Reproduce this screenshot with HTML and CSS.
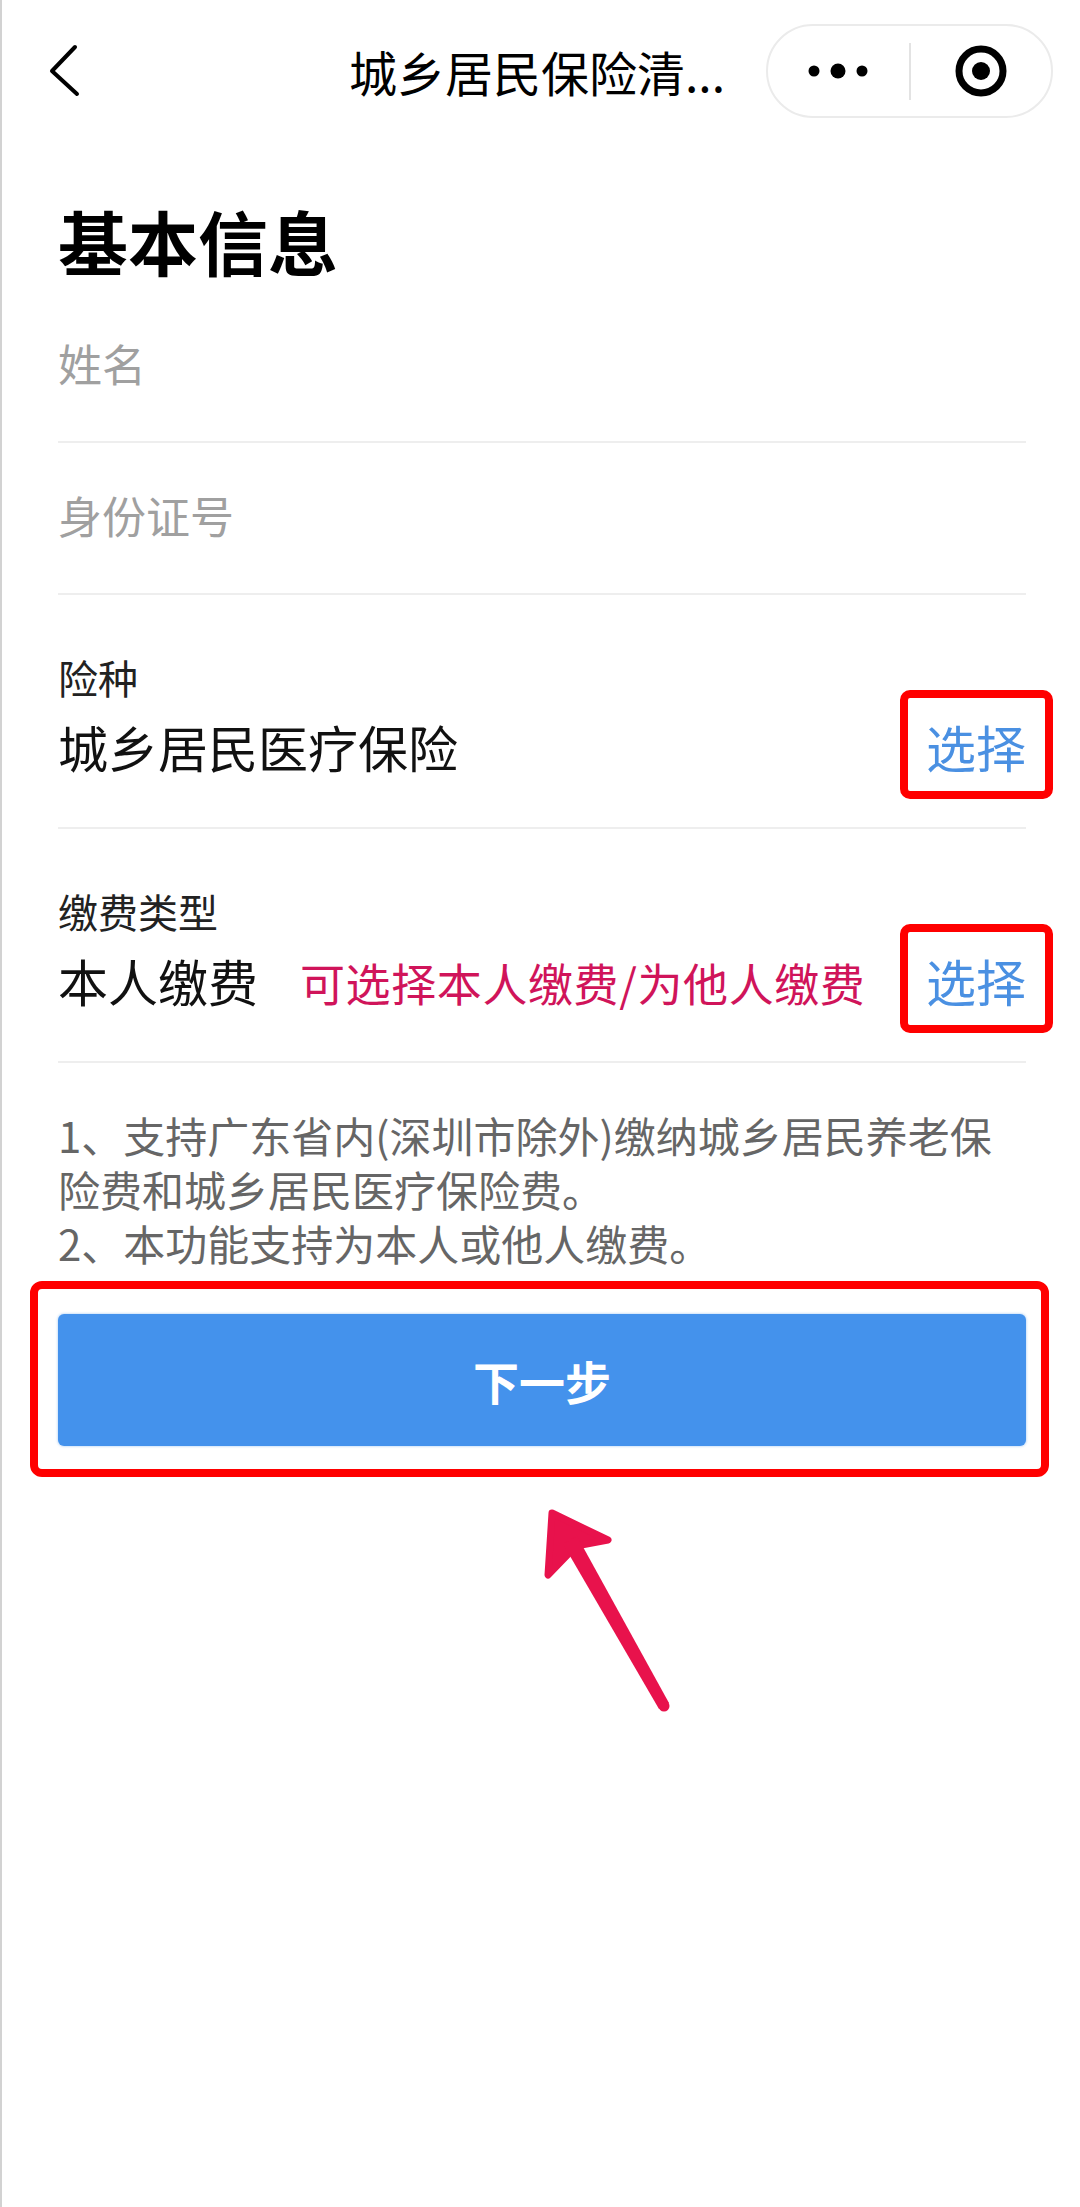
FILE: index.html
```html
<!DOCTYPE html>
<html lang="zh-CN">
<head>
  <meta charset="UTF-8" />
  <meta name="viewport" content="width=device-width, initial-scale=1.0" />
  <title>城乡居民保险清缴</title>
  <link rel="stylesheet" href="styles.css">
</head>
<body>
  <div class="page">
    <!-- top bar -->
    <div class="navbar">
      <div class="nav-back">
        <svg width="36" height="56" viewBox="0 0 36 56">
          <path d="M29 4 L6 28 L31 51" fill="none" stroke="#000" stroke-width="4" stroke-linecap="round" stroke-linejoin="round"/>
        </svg>
      </div>
      <div class="nav-title">城乡居民保险清...</div>
      <div class="capsule">
        <div class="capsule-half">
          <svg width="64" height="20" viewBox="0 0 64 20">
            <circle cx="8" cy="10" r="5.5" fill="#000"/>
            <circle cx="32" cy="10" r="7.5" fill="#000"/>
            <circle cx="56" cy="10" r="5.5" fill="#000"/>
          </svg>
        </div>
        <div class="capsule-divider"></div>
        <div class="capsule-half">
          <svg width="54" height="54" viewBox="0 0 54 54">
            <circle cx="27" cy="27" r="22" fill="none" stroke="#000" stroke-width="7"/>
            <circle cx="27" cy="27" r="9" fill="#000"/>
          </svg>
        </div>
      </div>
    </div>

    <div class="content">
      <h1 class="title">基本信息</h1>

      <div class="field">
        <input class="field-input" type="text" placeholder="姓名">
      </div>
      <div class="field">
        <input class="field-input" type="text" placeholder="身份证号">
      </div>

      <div class="select-row">
        <div class="select-label">险种</div>
        <div class="select-body">
          <span class="select-value">城乡居民医疗保险</span>
          <span class="pick marked">选择</span>
        </div>
      </div>

      <div class="select-row">
        <div class="select-label">缴费类型</div>
        <div class="select-body">
          <span class="select-value">本人缴费</span>
          <span class="select-hint">可选择本人缴费/为他人缴费</span>
          <span class="pick marked">选择</span>
        </div>
      </div>

      <p class="notes">1、支持广东省内(深圳市除外)缴纳城乡居民养老保险费和城乡居民医疗保险费。<br>2、本功能支持为本人或他人缴费。</p>

      <div class="next-wrap marked-wide">
        <button class="next-btn">下一步</button>
      </div>

      <!-- pointer drawn on the screenshot -->
      <svg class="pointer" width="160" height="220" viewBox="0 0 160 220">
        <polygon points="22,13 78,40 46,46 18,75" fill="#e8124c" stroke="#e8124c" stroke-width="7" stroke-linejoin="round"/>
        <polygon points="47,36 33,44 129,209 139,203" fill="#e8124c"/>
        <circle cx="134" cy="206" r="5.5" fill="#e8124c"/>
      </svg>
    </div>
  </div>
</body>
</html>
```

FILE: styles.css
```css
* {
  box-sizing: border-box;
}

body {
  margin: 0;
  background: #fff;
  font-family: "Noto Sans CJK SC", "Noto Sans", sans-serif;
  color: #111;
}

.page {
  min-height: 2207px;
  border-left: 2px solid #d2d2d2;
}

/* nav bar */
.navbar {
  height: 142px;
  display: grid;
  grid-template-columns: 1fr auto 1fr;
  align-items: center;
}

.nav-back {
  margin-left: 44px;
  display: flex;
}

.nav-title {
  font-size: 48px;
  line-height: 60px;
  color: #000;
  white-space: nowrap;
  margin-left: -8px;
}

.capsule {
  justify-self: end;
  margin-right: 27px;
  width: 287px;
  height: 94px;
  border: 2px solid #ebebeb;
  border-radius: 47px;
  display: flex;
  align-items: center;
}

.capsule-half {
  flex: 1;
  display: flex;
  justify-content: center;
  align-items: center;
}

.capsule-divider {
  width: 2px;
  height: 57px;
  background: #e3e3e3;
}

/* form */
.content {
  padding: 0 54px 0 56px;
}

.title {
  margin: 0 0 10px;
  padding-top: 59px;
  font-size: 70px;
  line-height: 80px;
  font-weight: 700;
  color: #000;
}

.field {
  height: 152px;
  padding-bottom: 6px;
  border-bottom: 2px solid #eee;
  display: flex;
  align-items: center;
}

.field-input {
  width: 100%;
  height: 60px;
  border: none;
  outline: none;
  padding: 0;
  font-family: inherit;
  font-size: 44px;
  color: #111;
  background: transparent;
}

.field-input::placeholder {
  color: #a0a0a0;
}

.select-row {
  padding: 58px 0 51px;
  border-bottom: 2px solid #eee;
}

.select-label {
  font-size: 40px;
  line-height: 48px;
  color: #222;
}

.select-body {
  margin-top: 15px;
  height: 60px;
  display: flex;
  align-items: baseline;
}

.select-value {
  font-size: 50px;
  line-height: 60px;
  color: #111;
}

.select-hint {
  margin-left: 42px;
  font-size: 45px;
  letter-spacing: 0.6px;
  color: #d0145a;
  white-space: nowrap;
}

.pick {
  margin-left: auto;
  font-size: 50px;
  line-height: 60px;
  color: #4a90e2;
  position: relative;
}

/* red highlight boxes */
.marked::after {
  content: "";
  position: absolute;
  left: -26px;
  right: -27px;
  top: -26px;
  bottom: -23px;
  border: 8px solid #f00;
  border-radius: 10px;
}

.notes {
  margin: 45px 0 0;
  font-size: 42px;
  line-height: 54px;
  color: #666;
}

.next-wrap {
  margin-top: 44px;
  position: relative;
}

.marked-wide::after {
  content: "";
  position: absolute;
  left: -28px;
  right: -23px;
  top: -33px;
  bottom: -31px;
  border: 8px solid #f00;
  border-radius: 12px;
}

.next-btn {
  display: block;
  width: 100%;
  height: 132px;
  border: none;
  border-radius: 6px;
  background: #4492ec;
  box-shadow: 0 0 2px 1px rgba(68, 146, 236, 0.25);
  color: #fff;
  font-family: inherit;
  font-size: 46px;
  font-weight: 700;
}

.pointer {
  display: block;
  margin: 54px 0 0 472px;
}
```
